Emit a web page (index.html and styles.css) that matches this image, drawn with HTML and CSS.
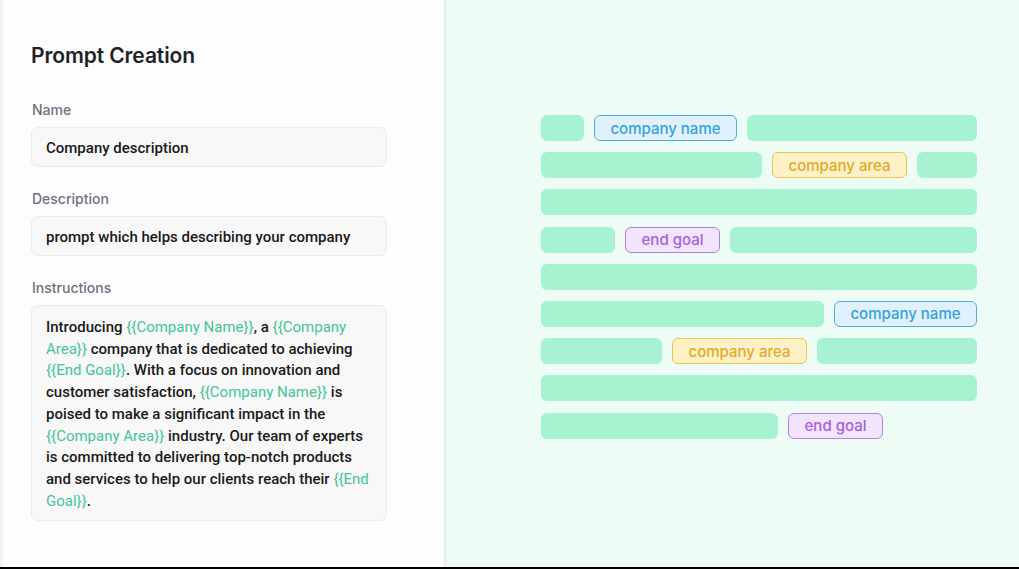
FILE: index.html
```html
<!DOCTYPE html>
<html lang="en">
<head>
<meta charset="utf-8">
<title>Prompt Creation</title>
<link rel="stylesheet" href="styles.css">
</head>
<body>
<main class="screen">
  <section class="editor">
    <h1 class="title">Prompt Creation</h1>
    <div class="field">
      <label class="label">Name</label>
      <div class="input">Company description</div>
    </div>
    <div class="field">
      <label class="label">Description</label>
      <div class="input">prompt which helps describing your company</div>
    </div>
    <div class="field">
      <label class="label">Instructions</label>
      <div class="textarea">Introducing <span class="var">{{Company Name}}</span>, a <span class="var">{{Company Area}}</span> company that is dedicated to achieving <span class="var">{{End Goal}}</span>. With a focus on innovation and customer satisfaction, <span class="var">{{Company Name}}</span> is poised to make a significant impact in the <span class="var">{{Company Area}}</span> industry. Our team of experts is committed to delivering top-notch products and services to help our clients reach their <span class="var">{{End Goal}}</span>.</div>
    </div>
  </section>
  <section class="preview">
    <div class="lines">
      <div class="row">
        <span class="bar" style="width:43px"></span>
        <span class="pill pill-name">company name</span>
        <span class="bar fill"></span>
      </div>
      <div class="row">
        <span class="bar" style="width:221px"></span>
        <span class="pill pill-area">company area</span>
        <span class="bar fill"></span>
      </div>
      <div class="row">
        <span class="bar fill"></span>
      </div>
      <div class="row">
        <span class="bar" style="width:74px"></span>
        <span class="pill pill-goal">end goal</span>
        <span class="bar fill"></span>
      </div>
      <div class="row">
        <span class="bar fill"></span>
      </div>
      <div class="row">
        <span class="bar fill"></span>
        <span class="pill pill-name">company name</span>
      </div>
      <div class="row">
        <span class="bar" style="width:121px"></span>
        <span class="pill pill-area">company area</span>
        <span class="bar fill"></span>
      </div>
      <div class="row">
        <span class="bar fill"></span>
      </div>
      <div class="row">
        <span class="bar" style="width:237px"></span>
        <span class="pill pill-goal">end goal</span>
      </div>
    </div>
  </section>
</main>
</body>
</html>
```

FILE: styles.css
```css
* { box-sizing: border-box; }

html, body {
  margin: 0;
  padding: 0;
  background: #000;
}

body {
  font-family: Inter, "Noto Sans", Arial, sans-serif;
  color: #111827;
}

.screen {
  display: flex;
  width: 1019px;
  height: 567px;
  overflow: hidden;
}

.editor {
  width: 445px;
  flex: none;
  background: #fdfdfd;
  border-left: 3px solid #f2f3f3;
  border-right: 1px solid #e4e7e6;
  box-shadow: 1px 0 3px rgba(0, 0, 0, 0.06);
  padding: 41px 0 0 28px;
  position: relative;
  z-index: 1;
}

.title {
  margin: 0 0 29px;
  font-size: 21px;
  line-height: 30px;
  font-weight: 600;
  color: #1f2329;
  letter-spacing: -0.1px;
}

.field {
  display: flex;
  flex-direction: column;
  gap: 7px;
  margin-bottom: 22px;
  width: 356px;
}

.label {
  font-size: 14px;
  line-height: 20px;
  font-weight: 500;
  color: #6b7280;
  padding-left: 1px;
}

.input {
  height: 40px;
  display: flex;
  align-items: center;
  padding: 1px 14px 0;
  background: #f8f8f8;
  border: 1px solid #ececec;
  border-radius: 7px;
  font-family: Roboto, Inter, sans-serif;
  font-size: 15px;
  font-weight: 500;
  color: #1a1a1a;
}

.textarea {
  padding: 11px 14px 8px;
  background: #f8f8f8;
  border: 1px solid #ececec;
  border-radius: 7px;
  font-family: Roboto, Inter, sans-serif;
  font-size: 15px;
  line-height: 21.7px;
  font-weight: 500;
  color: #1a1a1a;
}

.var {
  color: #43c693;
  font-weight: 400;
}

.preview {
  flex: 1;
  background: #edfdf5;
  padding: 115px 42px 0 96px;
}

.lines {
  display: flex;
  flex-direction: column;
  gap: 11.2px;
}

.row {
  display: flex;
  gap: 10px;
  height: 26px;
}

.bar {
  display: block;
  flex: none;
  height: 26px;
  border-radius: 6px;
  background: #a7f2d0;
}

.bar.fill { flex: 1; }

.pill {
  flex: none;
  height: 26px;
  display: flex;
  align-items: center;
  justify-content: center;
  border-radius: 6px;
  border: 1.5px solid;
  font-size: 15px;
  font-weight: 500;
}

.pill-name {
  width: 143px;
  background: #e0f1fd;
  border-color: #4aaede;
  color: #34a2da;
}

.pill-area {
  width: 135px;
  background: #fef1c6;
  border-color: #eec24f;
  color: #e2a92a;
}

.pill-goal {
  width: 95px;
  background: #f2e4fd;
  border-color: #b57fe2;
  color: #a462d8;
}
```
